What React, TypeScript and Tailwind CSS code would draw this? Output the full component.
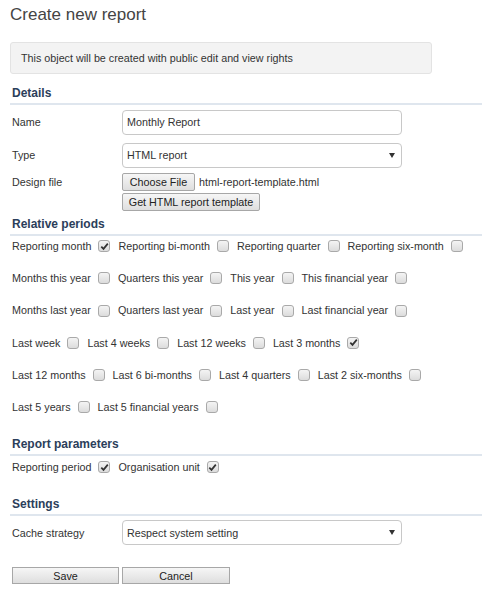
import React from "react";

const font = { fontFamily: '"Liberation Sans", Arial, sans-serif' };

function Box({ checked }: { checked?: boolean }) {
  return (
    <span className="relative inline-flex h-[12px] w-[12px] shrink-0 items-center justify-center rounded-[3px] border border-[#a9a9a9] bg-gradient-to-b from-[#f4f4f4] to-[#dcdcdc]">
      {checked && (
        <svg width="9" height="9" viewBox="0 0 9 9">
          <path d="M1.3 4.6 L3.5 6.9 L7.8 1.6" fill="none" stroke="#333" strokeWidth="1.7" />
        </svg>
      )}
    </span>
  );
}

function Item({ label, checked }: { label: string; checked?: boolean }) {
  return (
    <span className="flex items-center gap-[7px] whitespace-nowrap">
      <span>{label}</span>
      <Box checked={checked} />
    </span>
  );
}

function Heading({ children, className }: { children: React.ReactNode; className?: string }) {
  return (
    <div className={"border-b-2 border-[#dfe6ee] pb-[2px] pl-[2px] text-[12px] font-bold leading-[16px] text-[#2b3e5a] " + (className || "")}>
      {children}
    </div>
  );
}

function Select({ value }: { value: string }) {
  return (
    <div className="flex h-[25px] w-[280px] items-center justify-between rounded-[4px] border border-[#c8c8c8] bg-white pl-[4px] pr-[6px]">
      <span>{value}</span>
      <svg width="6" height="5" viewBox="0 0 6 5">
        <path d="M0 0 H6 L3 5 Z" fill="#333" />
      </svg>
    </div>
  );
}

const btn =
  "flex items-center justify-center whitespace-nowrap border border-[#a7a7a7] bg-gradient-to-b from-[#f6f6f6] to-[#dedede] text-[#222]";

export default function App() {
  const rows: [string, boolean?][][] = [
    [["Reporting month", true], ["Reporting bi-month"], ["Reporting quarter"], ["Reporting six-month"]],
    [["Months this year"], ["Quarters this year"], ["This year"], ["This financial year"]],
    [["Months last year"], ["Quarters last year"], ["Last year"], ["Last financial year"]],
    [["Last week"], ["Last 4 weeks"], ["Last 12 weeks"], ["Last 3 months", true]],
    [["Last 12 months"], ["Last 6 bi-months"], ["Last 4 quarters"], ["Last 2 six-months"]],
    [["Last 5 years"], ["Last 5 financial years"]],
  ];
  return (
    <div style={font} className="h-[604px] w-[482px] bg-white pl-[10px] text-[10.75px] text-[#333]">
      <div className="h-[30px] pt-[5px] text-[17px] leading-[20px] text-[#444]">Create new report</div>
      <div className="mt-[12px] flex h-[32px] w-[422px] items-center rounded-[3px] border border-[#e3e3e3] bg-[#f3f3f3] pl-[10px]">
        This object will be created with public edit and view rights
      </div>

      <Heading className="mt-[11px]">Details</Heading>
      <div className="mt-[5px] flex items-center">
        <div className="w-[112px] pl-[2px]">Name</div>
        <div className="flex h-[25px] w-[280px] items-center rounded-[4px] border border-[#c8c8c8] bg-white pl-[4px]">
          Monthly Report
        </div>
      </div>
      <div className="mt-[8px] flex items-center">
        <div className="w-[112px] pl-[2px]">Type</div>
        <Select value="HTML report" />
      </div>
      <div className="mt-[5px] flex items-center">
        <div className="w-[112px] pl-[2px]">Design file</div>
        <div className={btn + " h-[18px] w-[73px] rounded-[2px]"}>Choose File</div>
        <span className="ml-[4px]">html-report-template.html</span>
      </div>
      <div className="mt-[2px] flex">
        <div className="w-[112px]" />
        <div className={btn + " h-[18px] w-[138px] rounded-[2px]"}>Get HTML report template</div>
      </div>

      <Heading className="mt-[5px]">Relative periods</Heading>
      <div className="flex flex-col gap-[12.25px] pl-[2px]">
        {rows.map((r, i) => (
          <div key={i} className="flex h-[20px] items-center gap-[8px]">
            {r.map(([l, c]) => (
              <Item key={l} label={l} checked={c} />
            ))}
          </div>
        ))}
      </div>

      <Heading className="mt-[19px]">Report parameters</Heading>
      <div className="mt-[1px] flex h-[20px] items-center gap-[8px] pl-[2px]">
        <Item label="Reporting period" checked />
        <Item label="Organisation unit" checked />
      </div>

      <Heading className="mt-[19px]">Settings</Heading>
      <div className="mt-[4px] flex items-center">
        <div className="w-[112px] pl-[2px]">Cache strategy</div>
        <Select value="Respect system setting" />
      </div>

      <div className="mt-[22px] flex gap-[3px] pl-[2px]">
        <div className={btn + " h-[17px] w-[107px]"}>Save</div>
        <div className={btn + " h-[17px] w-[108px]"}>Cancel</div>
      </div>
    </div>
  );
}
